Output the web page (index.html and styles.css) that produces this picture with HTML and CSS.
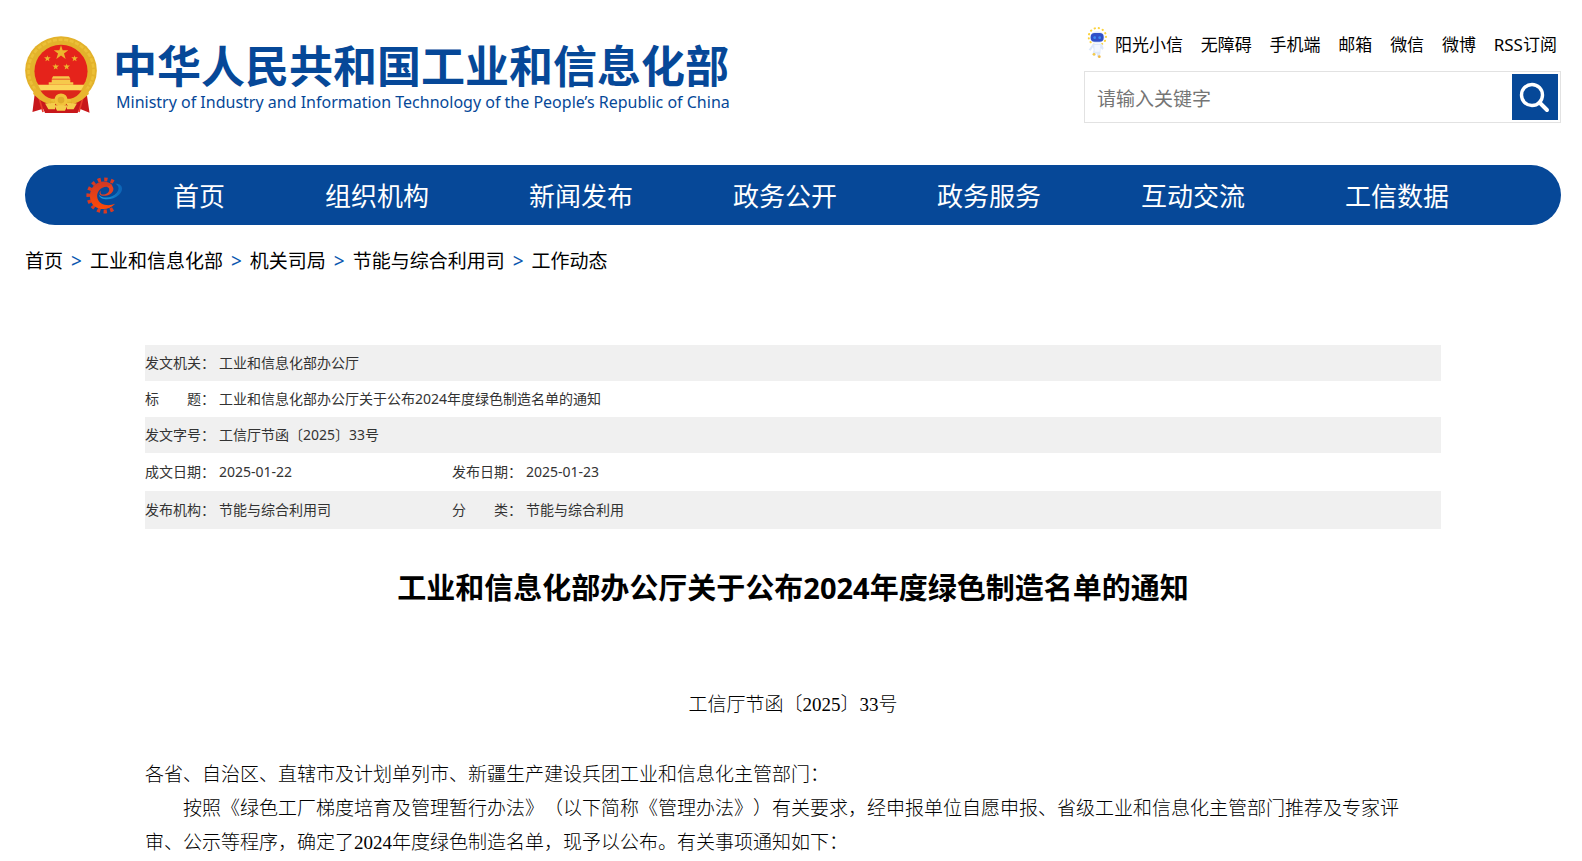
FILE: index.html
```html
<!DOCTYPE html>
<html lang="zh-CN">
<head>
<meta charset="utf-8">
<meta name="viewport" content="width=device-width, initial-scale=1">
<title>工业和信息化部办公厅关于公布2024年度绿色制造名单的通知</title>
<link rel="stylesheet" href="styles.css">
</head>
<body>
<div class="page">
  <header class="header">
    <a class="brand" href="#">
      <svg class="emblem" viewBox="30 33 216 232" aria-hidden="true">
        <path d="M60 197 L52 262 L84 252 L90 265 H188 L194 252 L224 264 L214 197 Z" fill="#c8171b"/>
        <path d="M70 212 L84 262 M206 212 L192 262" stroke="#e8392a" stroke-width="5"/>
        <ellipse cx="138" cy="137" rx="108" ry="103" fill="#e3b22b"/>
        <ellipse cx="138" cy="137" rx="98" ry="93" fill="none" stroke="#ecc038" stroke-width="8" stroke-dasharray="12 5"/>
        <circle cx="138" cy="139" r="80" fill="#e5231b"/>
        <path d="M138 61l5 15 17 0-13 10 5 16-14-10-14 10 5-16-13-10 17 0zM97 91l2 6h8l-6 5 2 7-6-4-6 4 2-7-6-5h8zM179 91l2 6h8l-6 5 2 7-6-4-6 4 2-7-6-5h8zM122 116l2 6h8l-6 5 2 7-6-4-6 4 2-7-6-5h8zM155 116l2 6h8l-6 5 2 7-6-4-6 4 2-7-6-5h8z" fill="#edb52d"/>
        <path d="M114 154h48l4 8h-56zM110 164h56v8h9v8h-74v-8h9z" fill="#f6c94b"/>
        <path d="M68 180h140l-10 17H78z" fill="#fbd65a"/>
        <path d="M58 190c20 6 30 26 52 32l-6 16c-24-4-38-20-50-30zM218 190c-20 6-30 26-52 32l6 16c24-4 38-20 50-30z" fill="#e9b52e"/>
        <path d="M76 197h124c-8 14-20 22-34 25h-56c-14-3-26-11-34-25z" fill="#dc261b"/>
        <circle cx="138" cy="226" r="20" fill="#f1c23b"/>
        <circle cx="138" cy="226" r="10" fill="#e0ab2b"/>
        <path d="M90 236l30-2v20h-20zM186 236l-30-2v20h20zM118 242h40l-8 16h-24z" fill="#f4cc4a"/>
      </svg>
      <span class="brand-text">
        <span class="brand-cn">中华人民共和国工业和信息化部</span>
        <span class="brand-en">Ministry of Industry and Information Technology of the People’s Republic of China</span>
      </span>
    </a>
    <div class="tools">
      <ul class="quick">
        <li><a class="quick-robot" href="#">
          <svg class="robot" viewBox="24 22 60 96" aria-hidden="true">
            <circle cx="55" cy="51" r="26" fill="none" stroke="#fbd23c" stroke-width="6" stroke-linecap="round" stroke-dasharray="1 11.6"/>
            <ellipse cx="55" cy="53" rx="22" ry="18" fill="#e6edfa"/>
            <rect x="35" y="40" width="39" height="26" rx="12" fill="#3150c8"/>
            <circle cx="47" cy="54" r="4" fill="#3f8cf5"/><circle cx="62" cy="54" r="4" fill="#3f8cf5"/>
            <path d="M42 72h27l5 14-4 5-5-7-1 18-5 11-5-1v-12l-6 9-8-3 4-16-2-8-7 11-6-3z" fill="#dfe9fa"/>
            <path d="M46 76h18l-2 20H47z" fill="#f3f7ff"/>
            <circle cx="45" cy="104" r="4" fill="#f7cb48"/><circle cx="61" cy="111" r="4" fill="#f3ba40"/>
          </svg>阳光小信</a></li>
        <li><a href="#">无障碍</a></li>
        <li><a href="#">手机端</a></li>
        <li><a href="#">邮箱</a></li>
        <li><a href="#">微信</a></li>
        <li><a href="#">微博</a></li>
        <li><a href="#">RSS订阅</a></li>
      </ul>
      <form class="search" role="search">
        <input class="search-input" type="text" placeholder="请输入关键字" aria-label="请输入关键字">
        <button class="search-button" type="button" aria-label="搜索">
          <svg class="search-icon" viewBox="0 0 46 46" aria-hidden="true">
            <circle cx="20" cy="21" r="10.5" fill="none" stroke="#fff" stroke-width="3.4"/>
            <path d="M27.500 28.500l7.500 7.500" stroke="#fff" stroke-width="4" stroke-linecap="round"/>
          </svg>
        </button>
      </form>
    </div>
  </header>

  <nav class="nav" aria-label="主导航">
    <div class="nav-home">
      <svg class="gear" viewBox="45 35 116 114" aria-hidden="true">
        <defs>
          <linearGradient id="gearFill" x1="0" y1="0" x2="0" y2="1"><stop offset="0" stop-color="#cf3826"/><stop offset="1" stop-color="#ff4a08"/></linearGradient>
          <linearGradient id="swoosh" x1="0" y1="0" x2="1" y2="0"><stop offset="0" stop-color="#19a5e6"/><stop offset="1" stop-color="#0c62b4"/></linearGradient>
        </defs>
        <path d="M132 53 A49 49 0 1 0 133 133" fill="none" stroke="#d83a22" stroke-width="12" stroke-dasharray="10 10"/>
        <path d="M129 62 C105 38 61 55 60 94 C60 138 112 147 137 119 C115 128 88 122 83 102 C77 79 101 60 121 69 Z" fill="url(#gearFill)"/>
        <path d="M126 62 C139 73 129 92 108 94 C91 96 85 88 93 78 C87 99 119 91 119 76 C119 68 113 66 107 68 Z" fill="#e54122"/>
        <path d="M137 58 C161 57 164 77 149 91 C129 110 91 109 87 91 C99 106 130 101 142 85 C151 74 149 63 137 58 Z" fill="url(#swoosh)"/>
      </svg>
      <a href="#">首页</a>
    </div>
    <a href="#">组织机构</a>
    <a href="#">新闻发布</a>
    <a href="#">政务公开</a>
    <a href="#">政务服务</a>
    <a href="#">互动交流</a>
    <a href="#">工信数据</a>
  </nav>

  <nav class="crumbs" aria-label="当前位置">
    <a href="#">首页</a><span class="sep">&gt;</span>
    <a href="#">工业和信息化部</a><span class="sep">&gt;</span>
    <a href="#">机关司局</a><span class="sep">&gt;</span>
    <a href="#">节能与综合利用司</a><span class="sep">&gt;</span>
    <a href="#">工作动态</a>
  </nav>

  <main class="article">
    <table class="meta">
      <colgroup><col class="col-label"><col class="col-first"><col class="col-label"><col></colgroup>
      <tr><th scope="row">发文机关：</th><td colspan="3">工业和信息化部办公厅</td></tr>
      <tr><th scope="row">标　　题：</th><td colspan="3">工业和信息化部办公厅关于公布2024年度绿色制造名单的通知</td></tr>
      <tr><th scope="row">发文字号：</th><td colspan="3">工信厅节函〔2025〕33号</td></tr>
      <tr class="tall"><th scope="row">成文日期：</th><td>2025-01-22</td><th scope="row">发布日期：</th><td>2025-01-23</td></tr>
      <tr class="tall"><th scope="row">发布机构：</th><td>节能与综合利用司</td><th scope="row">分　　类：</th><td>节能与综合利用</td></tr>
    </table>
    <h1 class="title">工业和信息化部办公厅关于公布2024年度绿色制造名单的通知</h1>
    <div class="content">
      <p class="doc-number">工信厅节函〔2025〕33号</p>
      <p>各省、自治区、直辖市及计划单列市、新疆生产建设兵团工业和信息化主管部门：</p>
      <p class="indent">按照《绿色工厂梯度培育及管理暂行办法》（以下简称《管理办法》）有关要求，经申报单位自愿申报、省级工业和信息化主管部门推荐及专家评审、公示等程序，确定了2024年度绿色制造名单，现予以公布。有关事项通知如下：</p>
    </div>
  </main>
</div>
</body>
</html>
```

FILE: styles.css
```css
* {
  box-sizing: border-box;
}

body {
  margin: 0;
  background: #fff;
  color: #000;
  font-family: "Noto Sans", "Noto Sans CJK SC", sans-serif;
  text-spacing-trim: space-all;
}

a {
  color: inherit;
  text-decoration: none;
}

.page {
  padding: 24px 21px 0 25px;
}

.header {
  display: flex;
  justify-content: space-between;
  align-items: flex-start;
  height: 141px;
}

.brand {
  display: flex;
  align-items: flex-start;
  gap: 16px;
  padding-top: 12px;
  color: #064898;
  white-space: nowrap;
}

.emblem {
  width: 72px;
  height: 77px;
}

.brand-text {
  display: flex;
  flex-direction: column;
  padding-top: 8px;
}

.brand-cn {
  font-size: 44px;
  font-weight: 700;
  line-height: 44px;
}

.brand-en {
  padding-left: 3px;
  font-family: "Noto Sans", sans-serif;
  font-size: 16px;
  line-height: 28px;
}

.tools {
  width: 477px;
}

.quick {
  display: flex;
  justify-content: space-between;
  align-items: center;
  height: 38px;
  margin: 0;
  padding: 0 4px 0 3px;
  list-style: none;
  font-size: 17px;
  white-space: nowrap;
}

.quick-robot {
  display: flex;
  align-items: center;
  gap: 8px;
}

.robot {
  width: 20px;
  height: 32px;
}

.search {
  display: flex;
  margin-top: 9px;
  padding: 2px;
  border: 1px solid #e2e2e2;
}

.search-input {
  flex: 1;
  min-width: 0;
  padding: 4px 10px 0;
  border: 0;
  font-family: inherit;
  font-size: 19px;
}

.search-input::placeholder {
  color: #757575;
}

.search-button {
  width: 46px;
  height: 46px;
  padding: 0;
  border: 0;
  background: #064898;
}

.search-icon {
  display: block;
  width: 46px;
  height: 46px;
}

.nav {
  display: grid;
  grid-template-columns: 190px repeat(6, 1fr);
  align-items: center;
  min-height: 60px;
  padding: 0 62px 0 60px;
  border-radius: 30px;
  background: #064898;
  color: #fff;
  font-size: 26px;
  text-align: center;
  white-space: nowrap;
}

.nav-home {
  display: flex;
  align-items: center;
  gap: 50px;
}

.gear {
  width: 38px;
  height: 38px;
}

.crumbs {
  display: flex;
  flex-wrap: wrap;
  gap: 8px;
  padding-top: 22px;
  font-size: 19px;
  line-height: 28px;
}

.sep {
  color: #0a58b0;
}

.article {
  padding: 70px 120px 0;
}

.meta {
  width: 100%;
  table-layout: fixed;
  border-collapse: collapse;
  color: #333;
  font-size: 14px;
  line-height: 20px;
}

.col-label {
  width: 74px;
}

.col-first {
  width: 233px;
}

.meta tr {
  height: 36px;
}

.meta .tall {
  height: 38px;
}

.meta tr:nth-child(odd) {
  background: #f0f0f0;
}

.meta th,
.meta td {
  padding: 0;
  font-weight: 400;
  text-align: left;
}

.title {
  margin: 38px 0 0;
  font-size: 29px;
  font-weight: 700;
  line-height: 42px;
  text-align: center;
}

.content {
  padding-top: 79px;
  font-family: "Liberation Serif", "Noto Sans CJK SC", serif;
  font-size: 19px;
  font-weight: 300;
  line-height: 34px;
}

.content p {
  margin: 0;
  padding-right: 16px;
}

.content .doc-number {
  padding: 0 0 36px;
  text-align: center;
}

.content .indent {
  text-indent: 2em;
}
```
